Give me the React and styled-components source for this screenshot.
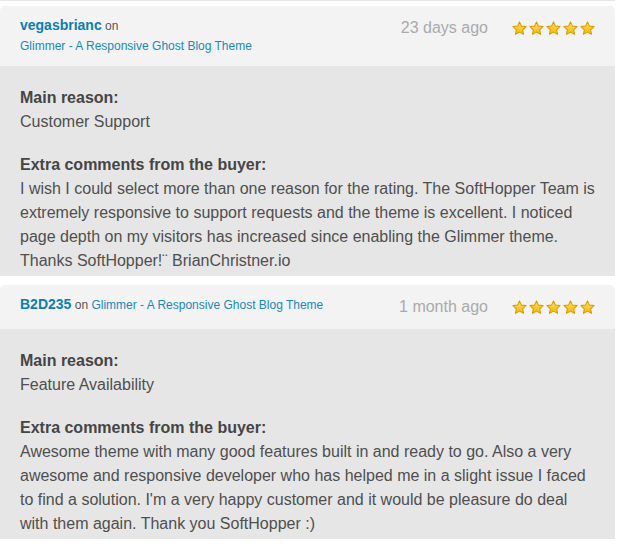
import styled, { createGlobalStyle } from 'styled-components';

const Global = createGlobalStyle`
  body {
    margin: 0;
    background: #fff;
    font-family: "Liberation Sans", Arial, sans-serif;
  }
`;

const Page = styled.div`
  width: 615px;
  display: flex;
  flex-direction: column;
  gap: 9px;
`;

const PrevTail = styled.div`
  height: 1px;
  background-color: #e6e6e6;
  margin-bottom: -4px;
`;

const Card = styled.div`
  display: flex;
  flex-direction: column;
`;

const Header = styled.div`
  background-color: #f3f3f3;
  border-radius: 5px 5px 0 0;
  padding: 10px 20px;
  display: flex;
  justify-content: space-between;
  align-items: flex-start;
`;

const Who = styled.div`
  width: 325px;
  font-size: 12px;
  line-height: 20px;
  color: #555;
`;

const Name = styled.a`
  font-size: 14px;
  line-height: 1;
  font-weight: bold;
  color: #0b7db6;
  text-decoration: none;
`;

const Item = styled.a`
  color: #1a87c2;
  text-decoration: none;
  white-space: nowrap;
`;

const Meta = styled.div`
  display: flex;
  align-items: center;
  height: 24px;
`;

const Date = styled.span`
  font-size: 16px;
  color: #aaa;
  margin-right: 24px;
`;

const Stars = styled.div`
  display: flex;
  gap: 2px;
`;

const Body = styled.div`
  background-color: #e6e6e6;
  padding: 20px 20px 3px 20px;
  font-size: 16px;
  line-height: 24px;
  color: #4f4f4f;
`;

const Label = styled.div`
  font-weight: bold;
  color: #454545;
`;

const Section = styled.div`
  margin-bottom: ${p => (p.last ? '0' : '19px')};
`;

function Star() {
  return (
    <svg width="15" height="15" viewBox="0 0 20 20">
      <defs>
        <linearGradient id="sg" x1="0" y1="0" x2="0" y2="1">
          <stop offset="0" stopColor="#ffe066" />
          <stop offset="1" stopColor="#f7b500" />
        </linearGradient>
      </defs>
      <path
        d="M10 1.2l2.6 5.6 6.1.7-4.5 4.2 1.2 6.1L10 14.8l-5.4 3 1.2-6.1-4.5-4.2 6.1-.7z"
        fill="url(#sg)"
        stroke="#d99a00"
        strokeWidth="1.4"
        strokeLinejoin="round"
      />
    </svg>
  );
}

const reviews = [
  {
    name: 'vegasbrianc',
    date: '23 days ago',
    reason: 'Customer Support',
    text: 'I wish I could select more than one reason for the rating. The SoftHopper Team is extremely responsive to support requests and the theme is excellent. I noticed page depth on my visitors has increased since enabling the Glimmer theme. Thanks SoftHopper!¨ BrianChristner.io',
  },
  {
    name: 'B2D235',
    date: '1 month ago',
    reason: 'Feature Availability',
    text: "Awesome theme with many good features built in and ready to go. Also a very awesome and responsive developer who has helped me in a slight issue I faced to find a solution. I'm a very happy customer and it would be pleasure do deal with them again. Thank you SoftHopper :)",
  },
];

function App() {
  return (
    <>
      <Global />
      <Page>
        <PrevTail />
        {reviews.map(r => (
          <Card key={r.name}>
            <Header>
              <Who>
                <Name href="#">{r.name}</Name> on{' '}
                <Item href="#">Glimmer - A Responsive Ghost Blog Theme</Item>
              </Who>
              <Meta>
                <Date>{r.date}</Date>
                <Stars>
                  {[0, 1, 2, 3, 4].map(i => (
                    <Star key={i} />
                  ))}
                </Stars>
              </Meta>
            </Header>
            <Body>
              <Section>
                <Label>Main reason:</Label>
                <div>{r.reason}</div>
              </Section>
              <Section last>
                <Label>Extra comments from the buyer:</Label>
                <div>{r.text}</div>
              </Section>
            </Body>
          </Card>
        ))}
      </Page>
    </>
  );
}

export default App;
